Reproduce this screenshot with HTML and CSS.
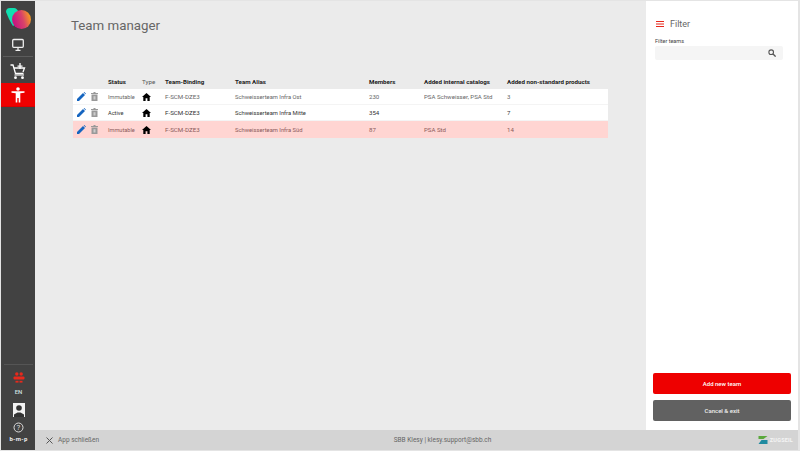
FILE: index.html
```html
<!DOCTYPE html>
<html lang="en">
<head>
<meta charset="utf-8">
<title>Team manager</title>
<link rel="stylesheet" href="styles.css">
</head>
<body>
<div class="app">
  <nav class="sidebar">
    <svg class="logo" width="26" height="24" viewBox="0 0 26 24">
      <defs><linearGradient id="lg" x1="0" y1="0.6" x2="1" y2="0.3"><stop offset="0.1" stop-color="#c8197f"/><stop offset="0.55" stop-color="#d9426a"/><stop offset="1" stop-color="#f9a31c"/></linearGradient></defs>
      <path d="M1 5 Q1 1 5 1 L9 1 Q12 1 14 6 L16 14 L8 19 Q6 16 4 12 Z" fill="#10e0b0"/>
      <circle cx="16.500" cy="12.500" r="9.500" fill="url(#lg)"/>
    </svg>
    <div class="nav-item nav-monitor">
      <svg width="14" height="14" viewBox="0 0 14 14"><rect x="1.700" y="1.500" width="10.600" height="7.800" rx="1" fill="none" stroke="#eee" stroke-width="1.300"/><path d="M7 9.500V12M4.500 12.300H9.500" stroke="#eee" stroke-width="1.300"/></svg>
    </div>
    <div class="nav-item nav-cart">
      <svg width="16" height="17" viewBox="0 0 16 17"><path d="M0.500 2H3L5.500 10.500H13.500M4 5H14.500L13 9" fill="none" stroke="#fff" stroke-width="1.300"/><path d="M10 0V6M7.500 3.200H12.500" stroke="#fff" stroke-width="1.300"/><path d="M4.500 12H14" stroke="#fff" stroke-width="1.100"/><circle cx="5.500" cy="14.700" r="1.400" fill="#fff"/><circle cx="12.500" cy="14.700" r="1.400" fill="#fff"/></svg>
    </div>
    <div class="nav-item nav-active">
      <svg width="14" height="16" viewBox="0 0 14 16"><circle cx="7" cy="2" r="1.800" fill="#fff"/><path d="M0.500 4.200H13.500V5.800L9.300 6.300V15.500H7.700V11H6.300V15.500H4.700V6.300L0.500 5.800Z" fill="#fff"/></svg>
    </div>
    <div class="nav-bottom">
      <svg class="team-icon" width="12" height="12" viewBox="0 0 12 12"><g fill="#e8291c"><circle cx="3.800" cy="2" r="1.700"/><circle cx="8.200" cy="2" r="1.700"/><rect x="0.500" y="4.500" width="11" height="3" rx="1"/><rect x="2.500" y="8.800" width="3" height="1.800"/><rect x="6.500" y="8.800" width="3" height="1.800"/></g></svg>
      <span class="lang">EN</span>
      <svg class="avatar" width="12" height="14" viewBox="0 0 12 14"><rect width="12" height="14" fill="#f2f2f2"/><circle cx="6" cy="5" r="2.800" fill="#333"/><path d="M1 14V11.500L4.500 9.500H7.500L11 11.500V14Z" fill="#333"/></svg>
      <svg class="help" width="11" height="11" viewBox="0 0 11 11"><circle cx="5.500" cy="5.500" r="4.500" fill="none" stroke="#ddd" stroke-width="1"/><text x="5.500" y="8" text-anchor="middle" class="help-mark">?</text></svg>
      <span class="bmp">b-m-p</span>
    </div>
  </nav>

  <div class="workspace">
    <div class="upper">
      <main class="content">
        <h1>Team manager</h1>
        <table class="teams">
          <colgroup>
            <col class="c-act"><col class="c-status"><col class="c-type"><col class="c-bind"><col class="c-alias"><col class="c-mem"><col class="c-cat"><col class="c-non">
          </colgroup>
          <thead>
            <tr><th></th><th>Status</th><th class="th-light">Type</th><th>Team-Binding</th><th>Team Alias</th><th>Members</th><th>Added internal catalogs</th><th>Added non-standard products</th></tr>
          </thead>
          <tbody>
            <tr class="muted">
              <td class="actions"><svg width="9" height="9" viewBox="0 0 9 9"><path d="M0 9V7L6 1 8 3 2 9Z" fill="#1565c0"/><path d="M6.700 0.500 7.300 0 9 1.700 8.500 2.300Z" fill="#1565c0"/></svg><svg class="bin" width="7" height="9" viewBox="0 0 7 9"><path d="M2.500 0H4.500V1H7V2H0V1H2.500ZM0.500 2.500H6.500V9H0.500Z" fill="#999"/><path d="M2.500 4.200H4.500V7.500H2.500Z" fill="#ccc"/></svg></td>
              <td class="status">Immutable</td>
              <td><svg class="home" width="9" height="8" viewBox="0 0 9 8"><path d="M4.500 0 9 4H7.700V8H5.400V5.300H3.600V8H1.300V4H0Z" fill="#000"/></svg></td>
              <td class="binding">F-SCM-DZE3</td><td class="alias">Schweisserteam Infra Ost</td><td>230</td><td>PSA Schweisser, PSA Std</td><td>3</td>
            </tr>
            <tr class="dark">
              <td class="actions"><svg width="9" height="9" viewBox="0 0 9 9"><path d="M0 9V7L6 1 8 3 2 9Z" fill="#1565c0"/><path d="M6.700 0.500 7.300 0 9 1.700 8.500 2.300Z" fill="#1565c0"/></svg><svg class="bin" width="7" height="9" viewBox="0 0 7 9"><path d="M2.500 0H4.500V1H7V2H0V1H2.500ZM0.500 2.500H6.500V9H0.500Z" fill="#999"/><path d="M2.500 4.200H4.500V7.500H2.500Z" fill="#ccc"/></svg></td>
              <td class="status">Active</td>
              <td><svg class="home" width="9" height="8" viewBox="0 0 9 8"><path d="M4.500 0 9 4H7.700V8H5.400V5.300H3.600V8H1.300V4H0Z" fill="#000"/></svg></td>
              <td class="binding">F-SCM-DZE3</td><td class="alias">Schweisserteam Infra Mitte</td><td>354</td><td></td><td>7</td>
            </tr>
            <tr class="muted alert">
              <td class="actions"><svg width="9" height="9" viewBox="0 0 9 9"><path d="M0 9V7L6 1 8 3 2 9Z" fill="#1565c0"/><path d="M6.700 0.500 7.300 0 9 1.700 8.500 2.300Z" fill="#1565c0"/></svg><svg class="bin" width="7" height="9" viewBox="0 0 7 9"><path d="M2.500 0H4.500V1H7V2H0V1H2.500ZM0.500 2.500H6.500V9H0.500Z" fill="#999"/><path d="M2.500 4.200H4.500V7.500H2.500Z" fill="#ccc"/></svg></td>
              <td class="status">Immutable</td>
              <td><svg class="home" width="9" height="8" viewBox="0 0 9 8"><path d="M4.500 0 9 4H7.700V8H5.400V5.300H3.600V8H1.300V4H0Z" fill="#000"/></svg></td>
              <td class="binding">F-SCM-DZE3</td><td class="alias">Schweisserteam Infra Süd</td><td>87</td><td>PSA Std</td><td>14</td>
            </tr>
          </tbody>
        </table>
      </main>
      <aside class="filter">
        <div class="filter-head">
          <svg width="8" height="6" viewBox="0 0 8 6"><path d="M0 .5H8M0 3H8M0 5.500H8" stroke="#e8291c" stroke-width="1"/></svg>
          <span>Filter</span>
        </div>
        <label class="filter-label">Filter teams</label>
        <div class="search">
          <svg width="8" height="8" viewBox="0 0 8 8"><circle cx="3.200" cy="3.200" r="2.300" fill="none" stroke="#555" stroke-width="1.100"/><path d="M5 5 7.600 7.600" stroke="#555" stroke-width="1.300"/></svg>
        </div>
        <div class="filter-actions">
          <button class="btn btn-add">Add new team</button>
          <button class="btn btn-cancel">Cancel &amp; exit</button>
        </div>
      </aside>
    </div>
    <footer class="footer">
      <div class="close">
        <svg width="7" height="7" viewBox="0 0 7 7"><path d="M.5 .5 6.500 6.500M6.500 .5 .5 6.500" stroke="#555" stroke-width="1"/></svg>
        <span>App schließen</span>
      </div>
      <div class="contact">SBB Klesy | klesy.support@sbb.ch</div>
      <div class="brand">
        <svg width="10" height="8" viewBox="0 0 9 8"><path d="M0 0H9L5 3H0Z" fill="#5aa83c"/><path d="M3 4H9V5H4.500L9 5V8H0Z" fill="#1f8aa0"/></svg>
        <span>ZUGSEIL</span>
      </div>
    </footer>
  </div>
</div>
</body>
</html>
```

FILE: styles.css
```css
* { box-sizing: border-box; }
html, body { margin: 0; height: 100%; }
body {
  width: 800px;
  height: 451px;
  overflow: hidden;
  background: #e4e4e4;
  font-family: Roboto, "Liberation Sans", sans-serif;
}
.app {
  display: flex;
  width: 797px;
  height: 449px;
  margin: 1px 2px 1px 1px;
}
.sidebar {
  width: 34px;
  flex: none;
  background: #424242;
  display: flex;
  flex-direction: column;
  align-items: stretch;
}
.logo { margin: 6px 0 0 4px; display: block; }
.nav-item { display: flex; justify-content: center; align-items: center; }
.nav-monitor { height: 24px; margin: 2px 2px 0; border-bottom: 1px solid #5c5c5c; }
.nav-cart { height: 26px; padding-top: 3px; }
.nav-active { height: 24px; background: #ee0000; border-bottom: 1px solid #d80000; }
.nav-bottom {
  margin-top: auto;
  display: flex;
  flex-direction: column;
  align-items: center;
  border-top: 1px solid #555;
  margin-left: 3px;
  margin-right: 2px;
  padding-bottom: 7px;
}
.team-icon { margin-top: 7px; }
.lang { font-size: 6px; font-weight: 500; color: #cfe0e0; margin-top: 4px; line-height: 7px; }
.avatar { margin-top: 8px; }
.help { margin-top: 5px; }
.help-mark { font-size: 8px; fill: #ddd; font-family: Roboto, sans-serif; }
.bmp { font-size: 6px; font-weight: 700; color: #eee; margin-top: 2px; line-height: 8px; letter-spacing: .3px; }

.workspace { flex: 1; display: flex; flex-direction: column; min-width: 0; }
.upper { flex: 1; display: flex; min-height: 0; }
.content { flex: 1; background: #ebebeb; padding: 16px 0 0 36px; min-width: 0; }
h1 { margin: 0 0 40px; font-size: 13.300px; line-height: 18px; font-weight: 400; color: #666; }
.teams {
  border-collapse: separate;
  border-spacing: 0;
  table-layout: fixed;
  width: 535px;
  margin-left: 2px;
  font-size: 6.100px;
}
.c-act { width: 35px; } .c-status { width: 34px; } .c-type { width: 23px; } .c-bind { width: 70px; }
.c-alias { width: 134px; } .c-mem { width: 55px; } .c-cat { width: 83px; } .c-non { width: 101px; }
.teams th { text-align: left; font-weight: 700; color: #222; height: 14px; padding: 0 0 1px; white-space: nowrap; font-size: 6.200px; }
.teams th.th-light { font-weight: 400; color: #555; }
.teams td { padding: 0; height: 16px; background: #fff; white-space: nowrap; color: #666; border-bottom: 1px solid #f4f4f4; }
.teams tr.dark td { color: #333; }
.teams tr.alert td { background: #ffd5d2; color: #8a5a5a; height: 17px; border-bottom: 0; }
.teams td.status { font-size: 5.600px; }
.teams td.binding { font-size: 6.200px; }
.teams td.alias { font-size: 5.800px; }
.teams td svg { display: block; }
.teams td.actions { padding-left: 4px; }
.teams td.actions svg { display: inline-block; vertical-align: middle; }
.teams td svg.bin { margin-left: 5px; }

.filter {
  width: 152px;
  flex: none;
  background: #fff;
  padding: 0 7px 8px 9px;
  display: flex;
  flex-direction: column;
}
.filter-head { display: flex; align-items: center; gap: 6px; margin: 18px 0 0 1px; height: 10px; font-size: 9px; color: #666; }
.filter-label { font-size: 5.500px; color: #444; margin-top: 9px; line-height: 7px; }
.search {
  height: 14px;
  background: #f5f5f5;
  border-radius: 2px;
  display: flex;
  align-items: center;
  justify-content: flex-end;
  padding-right: 7px;
  margin-top: 1px;
  width: 128px;
}
.filter-actions { margin-top: auto; margin-bottom: 1px; display: flex; flex-direction: column; gap: 6px; margin-left: -2px; }
.btn {
  height: 21px;
  width: 138px;
  border: 0;
  border-radius: 2px;
  color: #fff;
  font: 500 6px Roboto, sans-serif;
  padding: 0;
}
.btn-add { background: #ee0000; }
.btn-cancel { background: #616161; color: #eee; }

.footer {
  height: 20px;
  flex: none;
  background: #d4d4d4;
  display: grid;
  grid-template-columns: 1fr auto 1fr;
  align-items: center;
  padding: 0 5px 0 11px;
  font-size: 6.500px;
  color: #666;
}
.close { display: flex; align-items: center; gap: 5px; }
.contact { margin-left: 46px; }
.brand { justify-self: end; display: flex; align-items: center; gap: 2px; font-size: 5.500px; font-weight: 700; color: #f4f4f4; letter-spacing: .2px; }
```
